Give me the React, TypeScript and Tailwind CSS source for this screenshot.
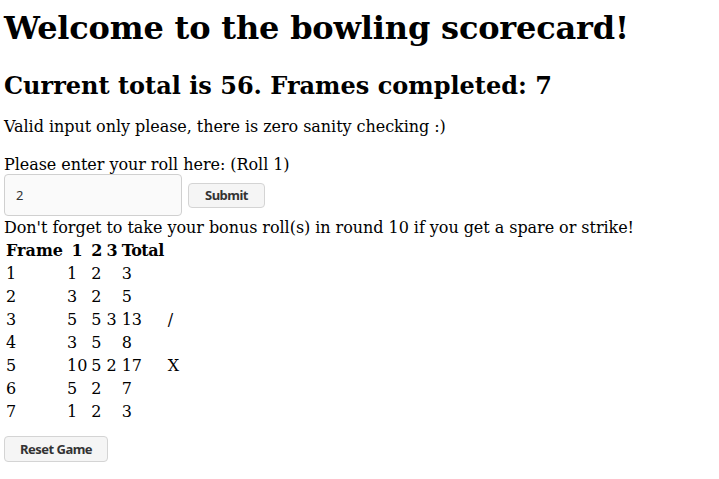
import { useState } from 'react';

interface Frame {
  frame: number;
  r1: number;
  r2: number;
  r3?: number;
  total: number;
  mark?: string;
}

const frames: Frame[] = [
  { frame: 1, r1: 1, r2: 2, total: 3 },
  { frame: 2, r1: 3, r2: 2, total: 5 },
  { frame: 3, r1: 5, r2: 5, r3: 3, total: 13, mark: '/' },
  { frame: 4, r1: 3, r2: 5, total: 8 },
  { frame: 5, r1: 10, r2: 5, r3: 2, total: 17, mark: 'X' },
  { frame: 6, r1: 5, r2: 2, total: 7 },
  { frame: 7, r1: 1, r2: 2, total: 3 },
];

const btn =
  "bg-[#f5f5f5] border border-[#d4d4d4] rounded-[4px] text-[13px] font-bold text-[#333] font-['Noto_Sans',sans-serif] tracking-[-0.5px] leading-none";

const App = () => {
  const [roll, setRoll] = useState('2');

  return (
    <div className="px-[4px] pt-[10px] font-['DejaVu_Serif',serif] text-black text-[16px] bg-white min-h-screen">
      <h1 className="text-[32px] font-bold leading-[37px] tracking-[-0.18px]">Welcome to the bowling scorecard!</h1>
      <h2 className="mt-[25px] text-[24px] font-bold leading-[28px]">
        Current total is 56. Frames completed: 7
      </h2>
      <p className="mt-[17px] leading-[19px] tracking-[-0.05px]">Valid input only please, there is zero sanity checking :)</p>
      <p className="mt-[19px] leading-[19px] tracking-[-0.05px]">Please enter your roll here: (Roll 1)</p>

      <div className="flex items-center gap-[6px]">
        <input
          value={roll}
          onChange={(e) => setRoll(e.target.value)}
          className="w-[178px] h-[42px] px-[11px] bg-[#fafafa] border border-[#d0d0d0] rounded-[4px] text-[13px] font-['Noto_Sans',sans-serif] text-[#333] outline-none"
        />
        <button className={`${btn} w-[77px] h-[25px]`}>Submit</button>
      </div>

      <p className="mt-[2px] leading-[19px] tracking-[-0.05px]">
        Don't forget to take your bonus roll(s) in round 10 if you get a spare or strike!
      </p>

      <table className="border-separate border-spacing-[2px] mt-[1px] -ml-[1px]">
        <thead>
          <tr>
            <th className="p-[1px] leading-[19px] font-bold text-center">Frame</th>
            <th className="p-[1px] leading-[19px] font-bold text-center">1</th>
            <th className="p-[1px] leading-[19px] font-bold text-center">2</th>
            <th className="p-[1px] leading-[19px] font-bold text-center">3</th>
            <th className="p-[1px] leading-[19px] font-bold text-center tracking-[-0.5px]">Total</th>
            <th className="p-[1px] leading-[19px]"></th>
          </tr>
        </thead>
        <tbody>
          {frames.map((f) => (
            <tr key={f.frame}>
              <td className="p-[1px] leading-[19px]">{f.frame}</td>
              <td className="p-[1px] leading-[19px]">{f.r1}</td>
              <td className="p-[1px] leading-[19px]">{f.r2}</td>
              <td className="p-[1px] leading-[19px]">{f.r3 ?? ''}</td>
              <td className="p-[1px] leading-[19px]">{f.total}</td>
              <td className="p-[1px] leading-[19px]">{f.mark ?? ''}</td>
            </tr>
          ))}
        </tbody>
      </table>

      <button className={`${btn} w-[104px] h-[26px] mt-[12px]`}>Reset Game</button>
    </div>
  );
};

export default App;
